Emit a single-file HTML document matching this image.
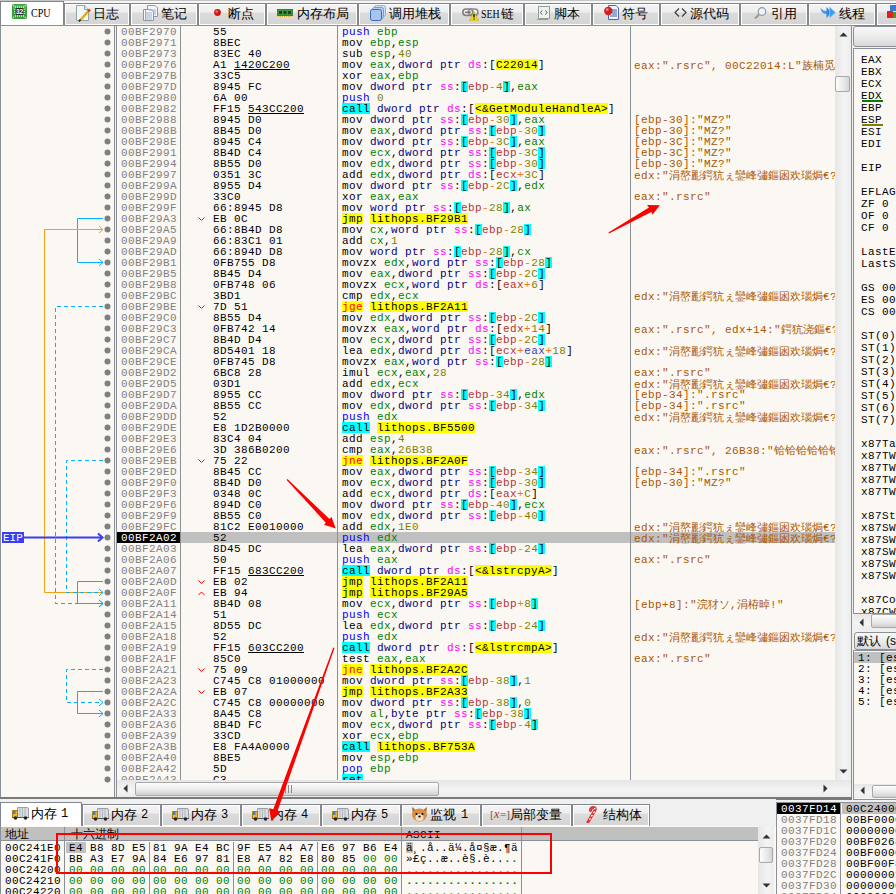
<!DOCTYPE html>
<html><head><meta charset="utf-8">
<style>
*{margin:0;padding:0;box-sizing:border-box}
html,body{width:896px;height:894px;overflow:hidden;background:#f0f0f0;font-family:"Liberation Mono",monospace}
b{font-weight:normal}
.abs{position:absolute}
.mono{font-family:"Liberation Mono",monospace;font-size:11px;letter-spacing:0.4px;line-height:13px;white-space:pre}
/* tabs */
.tab{position:absolute;border:1px solid #80868c;border-bottom:none;background:linear-gradient(#f3f3f3 0,#eeeeee 40%,#dcdcdc 41%,#d4d4d4 100%);box-shadow:inset 1px 1px 0 #fff,inset -1px -1px 0 #fff;white-space:nowrap}
.tab.act{background:#fff;box-shadow:none}
.cj{position:absolute;font-family:"Liberation Sans",sans-serif;font-size:12.5px;line-height:12px;color:#000;white-space:pre}
.tabline{position:absolute;height:1px;background:#80868c}
/* panel */
.pbg{background:#fbf8f3}
.r{position:absolute;left:0;width:719px;height:11px}
.r div{position:absolute;top:0;height:11px;font-family:"Liberation Mono",monospace;font-size:11px;letter-spacing:0.4px;line-height:13px;white-space:pre;color:#000}
.r .ad{left:4px;color:#808080}
.r .by{left:96px}
.r .ds{left:225px}
.r .cm{left:517px;color:#aa5500}
.r .cm i{font-style:normal;font-family:"Liberation Sans",sans-serif;font-size:10.8px;letter-spacing:0}
.r .chev{position:absolute;left:81px;top:4px}
.r b{display:inline-block;height:11px;vertical-align:top}
.r.eip{background:#c0c0c0}
.r.eip .ad{left:0;width:63px;padding-left:4px;background:#000;color:#fff}
u{text-decoration:underline;text-underline-offset:1px}
.sep{position:absolute;width:1px;background:#8a9096}
.rg{position:absolute;left:7px;font-family:"Liberation Mono",monospace;font-size:11px;letter-spacing:0.4px;line-height:14px;white-space:pre;color:#000}
.hr{position:absolute;left:0;width:758px;height:11px}
.hr div{position:absolute;top:0;height:11px;font-family:"Liberation Mono",monospace;font-size:11px;letter-spacing:0.4px;line-height:13px;white-space:pre;color:#000}
.hr .ha{left:5px}
.hr .z{color:#008000}
.hr .sel{background:#c0c0c0;margin-left:-3px;padding-left:3px;width:20px}
.hr .hs{left:406px}
.hr b{display:inline-block;height:11px;vertical-align:top}
.sr{position:absolute;left:0;width:121px;height:11px}
.sr div{position:absolute;top:0;height:11px;font-family:"Liberation Mono",monospace;font-size:11px;letter-spacing:0.4px;line-height:13px;white-space:pre}
.sr .sa{left:0;width:64px;padding-left:4px;color:#808080}
.sr .sv{left:65px;width:60px;padding-left:4px;color:#000}
.sr.ssel .sa{background:#000;color:#fff}
.sr.ssel .sv{background:#c0c0c0}
.sb{position:absolute;background:linear-gradient(90deg,#e6e6e6,#f4f4f4 60%,#ececec)}
.sbh{position:absolute;background:linear-gradient(#e6e6e6,#f4f4f4 60%,#ececec)}
.thumbv{position:absolute;border:1px solid #a8a8a8;border-radius:2px;background:linear-gradient(90deg,#fdfdfd,#e4e4e4 70%,#d4d4d4)}
.thumbh{position:absolute;border:1px solid #a8a8a8;border-radius:2px;background:linear-gradient(#fdfdfd,#e8e8e8 60%,#d0d0d0)}
</style></head><body>

<!-- TOP TABS -->
<div class="abs" style="left:0;top:0;width:896px;height:1px;background:#c4c4c4"></div>
<div class="abs" style="left:0;top:1px;width:896px;height:24px;background:#f6f6f6"></div>
<div class="tab act" style="left:0px;top:1px;width:64px;height:24px"></div><svg class="abs" style="left:12px;top:4px" width="15" height="15" viewBox="0 0 15 15"><rect x="0" y="0" width="15" height="15" rx="1.5" fill="#3a9c3a"/><rect x="0.5" y="0.5" width="14" height="5" rx="1" fill="#4eb04e"/><path d="M3.5 2v2M5.5 2v2M7.5 2v2M9.5 2v2M11.5 2v2M3.5 11v2M5.5 11v2M7.5 11v2M9.5 11v2M11.5 11v2M2 5.5h2M2 7.5h2M2 9.5h2M11 5.5h2M11 7.5h2M11 9.5h2" stroke="#e6d68a" stroke-width="1"/><circle cx="1.7" cy="1.7" r="0.8" fill="#f0e0a0"/><circle cx="13.3" cy="1.7" r="0.8" fill="#f0e0a0"/><circle cx="1.7" cy="13.3" r="0.8" fill="#f0e0a0"/><circle cx="13.3" cy="13.3" r="0.8" fill="#f0e0a0"/><rect x="3.5" y="4" width="8" height="7" rx="1" fill="#2a2a2a"/><text x="7.5" y="10" font-size="6.5" font-family="Liberation Sans" font-weight="bold" fill="#fff" text-anchor="middle">32</text></svg><div class="abs" style="left:31px;top:7px;font-family:'Liberation Serif';font-size:12px;line-height:13px;color:#000;transform:scaleX(0.84);transform-origin:0 0">CPU</div>
<div class="tab" style="left:64px;top:3px;width:66px;height:22px"></div><svg class="abs" style="left:75px;top:5px" width="16" height="17" viewBox="0 0 16 17"><path d="M1.5 0.5H9.5L13.5 4.5V15.5H1.5Z" fill="#f2f6f8" stroke="#8fa6a8"/><path d="M9.5 0.5V4.5H13.5" fill="#dde8ea" stroke="#8fa6a8"/><path d="M5 15.5L13.5 6" stroke="#d8b020" stroke-width="2.6"/><path d="M4 16.5L5.5 14.5" stroke="#222" stroke-width="1.5"/><path d="M13 6.5L15 4.5" stroke="#e03a3a" stroke-width="2.6"/></svg><div class="cj" style="left:93px;top:8px;">日志</div>
<div class="tab" style="left:130px;top:3px;width:68px;height:22px"></div><svg class="abs" style="left:143px;top:5px" width="15" height="16" viewBox="0 0 15 16"><path d="M4.5 0.5H12L14.5 3V11.5H4.5Z" fill="#f4f6fa" stroke="#8c98a4"/><path d="M0.5 4.5H8L10.5 7V15.5H0.5Z" fill="#f8fafc" stroke="#8c98a4"/><path d="M2 8h7M2 10h7M2 12h7M2 14h7M6 5h7M10 7h3M10 9h3" stroke="#9ab0d0"/><path d="M2.5 5v10" stroke="#e09090"/></svg><div class="cj" style="left:161px;top:8px;">笔记</div>
<div class="tab" style="left:198px;top:3px;width:68px;height:22px"></div><svg class="abs" style="left:214px;top:9px" width="7" height="7" viewBox="0 0 7 7"><circle cx="3.5" cy="3.5" r="3.4" fill="#d01818"/><circle cx="2.7" cy="2.5" r="1.2" fill="#f07070"/></svg><div class="cj" style="left:228px;top:8px;">断点</div>
<div class="tab" style="left:266px;top:3px;width:92px;height:22px"></div><svg class="abs" style="left:277px;top:9px" width="16" height="8" viewBox="0 0 16 8"><rect x="0" y="0.5" width="16" height="6" fill="#3c9a3c" stroke="#2a6a2a" stroke-width="0.8"/><rect x="2" y="2" width="3" height="3" fill="#333"/><rect x="6.5" y="2" width="3" height="3" fill="#333"/><rect x="11" y="2" width="3" height="3" fill="#333"/><path d="M1 7.5h14" stroke="#d8b040" stroke-dasharray="1,1"/></svg><div class="cj" style="left:297px;top:8px;">内存布局</div>
<div class="tab" style="left:358px;top:3px;width:92px;height:22px"></div><svg class="abs" style="left:370px;top:5px" width="17" height="16" viewBox="0 0 17 16"><rect x="4.5" y="0.5" width="11" height="11" rx="2" fill="#cfe0f4" stroke="#90aed8"/><rect x="2.5" y="2.5" width="11" height="11" rx="2" fill="#b8d0f0" stroke="#7898d0"/><rect x="0.5" y="4.5" width="11" height="11" rx="2" fill="#a8c4ec" stroke="#3a68c0"/></svg><div class="cj" style="left:389px;top:8px;">调用堆栈</div>
<div class="tab" style="left:450px;top:3px;width:74px;height:22px"></div><svg class="abs" style="left:462px;top:8px" width="17" height="13" viewBox="0 0 17 13"><rect x="0.8" y="1" width="10" height="6.5" rx="3.2" fill="none" stroke="#808080" stroke-width="1.6"/><rect x="6.5" y="1" width="9.5" height="6.5" rx="3.2" fill="none" stroke="#8a8a8a" stroke-width="1.6"/><path d="M3 4.2H9" stroke="#666" stroke-width="1.2"/><path d="M7.5 12.8L12 3.5L16.5 12.8Z" fill="#f0dc20" stroke="#c0a800" stroke-width="0.6"/><path d="M12 6v3.5M12 10.5v1" stroke="#000" stroke-width="1.3"/></svg><div class="abs" style="left:481px;top:8px;font-family:'Liberation Serif';font-size:12px;line-height:13px;letter-spacing:0;transform:scaleX(0.82);transform-origin:0 0">SEH</div><div class="cj" style="left:501px;top:8px;">链</div>
<div class="tab" style="left:524px;top:3px;width:68px;height:22px"></div><svg class="abs" style="left:536px;top:5px" width="15" height="15" viewBox="0 0 15 15"><path d="M2.5 1.5H13.5V13.5H2.5Z" fill="#eef2ec" stroke="#90a090"/><path d="M1 14.5H12" stroke="#90a090"/><path d="M6 5.5L4.5 7.5L6 9.5M9.5 5.5L11 7.5L9.5 9.5" stroke="#556" fill="none"/></svg><div class="cj" style="left:554px;top:8px;">脚本</div>
<div class="tab" style="left:592px;top:3px;width:68px;height:22px"></div><svg class="abs" style="left:604px;top:5px" width="15" height="15" viewBox="0 0 15 15"><path d="M4.5 0.5H12L14.5 3V14.5H4.5Z" fill="#f0f4fc" stroke="#4a6ab0"/><path d="M8 5h5M8 7h5M8 9h5M6 11h7" stroke="#3a5ab0"/><circle cx="4.3" cy="6" r="4.2" fill="#d42020"/><circle cx="3.2" cy="4.6" r="1.4" fill="#f08080"/></svg><div class="cj" style="left:622px;top:8px;">符号</div>
<div class="tab" style="left:660px;top:3px;width:80px;height:22px"></div><svg class="abs" style="left:674px;top:8px" width="13" height="9" viewBox="0 0 13 9"><path d="M5 0.5L1 4.5L5 8.5M8 0.5L12 4.5L8 8.5" stroke="#444" stroke-width="1.3" fill="none"/></svg><div class="cj" style="left:690px;top:8px;">源代码</div>
<div class="tab" style="left:740px;top:3px;width:68px;height:22px"></div><svg class="abs" style="left:754px;top:7px" width="13" height="12" viewBox="0 0 13 12"><circle cx="8" cy="4.5" r="3.8" fill="#eef4fa" stroke="#8898a8" stroke-width="1.2"/><path d="M5 7.5L1 11.5" stroke="#a89878" stroke-width="2"/></svg><div class="cj" style="left:771px;top:8px;">引用</div>
<div class="tab" style="left:808px;top:3px;width:68px;height:22px"></div><svg class="abs" style="left:820px;top:7px" width="16" height="11" viewBox="0 0 16 11"><path d="M0.5 0.5Q1 7.5 8 7.5L8 4Q3 4.5 0.5 0.5Z" fill="#4a9ee8"/><path d="M6.5 0L11.5 5.5L6.5 11Z" fill="#2e8ae0"/><path d="M9.5 0L15.5 5.5L9.5 11Z" fill="#3aa0f0" stroke="#8cd0ff" stroke-width="0.6"/></svg><div class="cj" style="left:839px;top:8px;">线程</div>
<div class="tab" style="left:876px;top:3px;width:31px;height:22px"></div><svg class="abs" style="left:887px;top:5px" width="9" height="13" viewBox="0 0 9 13"><rect x="3" y="0" width="6" height="6" fill="#3a7ad8"/><rect x="0" y="6" width="6" height="7" fill="#e02020"/><rect x="6" y="7" width="3" height="6" fill="#30a030"/></svg>
<div class="tabline" style="left:0;top:25px;width:896px"></div>
<!-- DISASM PANEL -->
<div class="abs pbg" style="left:0;top:25px;width:115px;height:773px;border:1px solid #8a9096;border-bottom:none"></div>
<svg class="abs" style="left:0;top:26px" width="115" height="771" viewBox="0 0 115 771"><circle cx="107.5" cy="5.5" r="3" fill="#808080"/><circle cx="107.5" cy="16.5" r="3" fill="#808080"/><circle cx="107.5" cy="27.5" r="3" fill="#808080"/><circle cx="107.5" cy="38.5" r="3" fill="#808080"/><circle cx="107.5" cy="49.5" r="3" fill="#808080"/><circle cx="107.5" cy="60.5" r="3" fill="#808080"/><circle cx="107.5" cy="71.5" r="3" fill="#808080"/><circle cx="107.5" cy="82.5" r="3" fill="#808080"/><circle cx="107.5" cy="93.5" r="3" fill="#808080"/><circle cx="107.5" cy="104.5" r="3" fill="#808080"/><circle cx="107.5" cy="115.5" r="3" fill="#808080"/><circle cx="107.5" cy="126.5" r="3" fill="#808080"/><circle cx="107.5" cy="137.5" r="3" fill="#808080"/><circle cx="107.5" cy="148.5" r="3" fill="#808080"/><circle cx="107.5" cy="159.5" r="3" fill="#808080"/><circle cx="107.5" cy="170.5" r="3" fill="#808080"/><circle cx="107.5" cy="181.5" r="3" fill="#808080"/><circle cx="107.5" cy="192.5" r="3" fill="#808080"/><circle cx="107.5" cy="203.5" r="3" fill="#808080"/><circle cx="107.5" cy="214.5" r="3" fill="#808080"/><circle cx="107.5" cy="225.5" r="3" fill="#808080"/><circle cx="107.5" cy="236.5" r="3" fill="#808080"/><circle cx="107.5" cy="247.5" r="3" fill="#808080"/><circle cx="107.5" cy="258.5" r="3" fill="#808080"/><circle cx="107.5" cy="269.5" r="3" fill="#808080"/><circle cx="107.5" cy="280.5" r="3" fill="#808080"/><circle cx="107.5" cy="291.5" r="3" fill="#808080"/><circle cx="107.5" cy="302.5" r="3" fill="#808080"/><circle cx="107.5" cy="313.5" r="3" fill="#808080"/><circle cx="107.5" cy="324.5" r="3" fill="#808080"/><circle cx="107.5" cy="335.5" r="3" fill="#808080"/><circle cx="107.5" cy="346.5" r="3" fill="#808080"/><circle cx="107.5" cy="357.5" r="3" fill="#808080"/><circle cx="107.5" cy="368.5" r="3" fill="#808080"/><circle cx="107.5" cy="379.5" r="3" fill="#808080"/><circle cx="107.5" cy="390.5" r="3" fill="#808080"/><circle cx="107.5" cy="401.5" r="3" fill="#808080"/><circle cx="107.5" cy="412.5" r="3" fill="#808080"/><circle cx="107.5" cy="423.5" r="3" fill="#808080"/><circle cx="107.5" cy="434.5" r="3" fill="#808080"/><circle cx="107.5" cy="445.5" r="3" fill="#808080"/><circle cx="107.5" cy="456.5" r="3" fill="#808080"/><circle cx="107.5" cy="467.5" r="3" fill="#808080"/><circle cx="107.5" cy="478.5" r="3" fill="#808080"/><circle cx="107.5" cy="489.5" r="3" fill="#808080"/><circle cx="107.5" cy="500.5" r="3" fill="#808080"/><circle cx="107.5" cy="511.5" r="3" fill="#808080"/><circle cx="107.5" cy="522.5" r="3" fill="#808080"/><circle cx="107.5" cy="533.5" r="3" fill="#808080"/><circle cx="107.5" cy="544.5" r="3" fill="#808080"/><circle cx="107.5" cy="555.5" r="3" fill="#808080"/><circle cx="107.5" cy="566.5" r="3" fill="#808080"/><circle cx="107.5" cy="577.5" r="3" fill="#808080"/><circle cx="107.5" cy="588.5" r="3" fill="#808080"/><circle cx="107.5" cy="599.5" r="3" fill="#808080"/><circle cx="107.5" cy="610.5" r="3" fill="#808080"/><circle cx="107.5" cy="621.5" r="3" fill="#808080"/><circle cx="107.5" cy="632.5" r="3" fill="#808080"/><circle cx="107.5" cy="643.5" r="3" fill="#808080"/><circle cx="107.5" cy="654.5" r="3" fill="#808080"/><circle cx="107.5" cy="665.5" r="3" fill="#808080"/><circle cx="107.5" cy="676.5" r="3" fill="#808080"/><circle cx="107.5" cy="687.5" r="3" fill="#808080"/><circle cx="107.5" cy="698.5" r="3" fill="#808080"/><circle cx="107.5" cy="709.5" r="3" fill="#808080"/><circle cx="107.5" cy="720.5" r="3" fill="#808080"/><circle cx="107.5" cy="731.5" r="3" fill="#808080"/><circle cx="107.5" cy="742.5" r="3" fill="#808080"/><circle cx="107.5" cy="753.5" r="3" fill="#808080"/><path d="M103 192.5 H77.5 V236.5 H103" stroke="#08b0f8" fill="none" stroke-width="1" /><path d="M99 233.0 L103 236.5 L99 240.0" stroke="#08b0f8" fill="none" stroke-width="1"/><path d="M103 566.5 H44.5 V203.5 H103" stroke="#f5a014" fill="none" stroke-width="1" /><path d="M99 200.0 L103 203.5 L99 207.0" stroke="#f5a014" fill="none" stroke-width="1"/><path d="M103 280.5 H55.5 V577.5 H103" stroke="#08b0f8" fill="none" stroke-width="1" stroke-dasharray="4,3"/><path d="M99 574.0 L103 577.5 L99 581.0" stroke="#08b0f8" fill="none" stroke-width="1"/><path d="M103 434.5 H66.5 V566.5 H103" stroke="#08b0f8" fill="none" stroke-width="1" stroke-dasharray="4,3"/><path d="M99 563.0 L103 566.5 L99 570.0" stroke="#08b0f8" fill="none" stroke-width="1"/><path d="M103 555.5 H77.5 V577.5 H103" stroke="#08b0f8" fill="none" stroke-width="1" /><path d="M99 574.0 L103 577.5 L99 581.0" stroke="#08b0f8" fill="none" stroke-width="1"/><path d="M103 643.5 H66.5 V676.5 H103" stroke="#08b0f8" fill="none" stroke-width="1" stroke-dasharray="4,3"/><path d="M99 673.0 L103 676.5 L99 680.0" stroke="#08b0f8" fill="none" stroke-width="1"/><path d="M103 665.5 H77.5 V687.5 H103" stroke="#08b0f8" fill="none" stroke-width="1" /><path d="M99 684.0 L103 687.5 L99 691.0" stroke="#08b0f8" fill="none" stroke-width="1"/></svg>
<div class="abs" style="left:2px;top:532px;width:22px;height:11px;background:#3c3cf0"></div>
<div class="abs mono" style="left:3px;top:533px;color:#fff;font-size:11px;line-height:11px;letter-spacing:0px">EIP</div>
<svg class="abs" style="left:0;top:532px" width="110" height="11" viewBox="0 0 110 11"><path d="M24 5.5H102" stroke="#3c3cf0" stroke-width="2"/><path d="M98 1.5L102.5 5.5L98 9.5" stroke="#3c3cf0" stroke-width="2" fill="none"/></svg>

<div class="abs pbg" style="left:116px;top:25px;width:736px;height:773px;border:1px solid #8a9096;border-bottom:none"></div>
<div class="abs" style="left:117px;top:26px;width:718px;height:754px;overflow:hidden">
<div class="r" style="top:0px">
<div class="ad">00BF2970</div>
<div class="by">55</div>
<div class="ds"><b style="color:#0000ff">push</b> <b style="color:#008000">ebp</b></div>
</div>
<div class="r" style="top:11px">
<div class="ad">00BF2971</div>
<div class="by">8BEC</div>
<div class="ds">mov <b style="color:#008000">ebp</b>,<b style="color:#008000">esp</b></div>
</div>
<div class="r" style="top:22px">
<div class="ad">00BF2973</div>
<div class="by">83EC 40</div>
<div class="ds">sub <b style="color:#008000">esp</b>,<b style="color:#808000">40</b></div>
</div>
<div class="r" style="top:33px">
<div class="ad">00BF2976</div>
<div class="by">A1 <u>1420C200</u></div>
<div class="ds">mov <b style="color:#008000">eax</b>,<b style="color:#000080">dword ptr </b><b style="color:#ff00ff">ds</b>:[<b style="background:#ffff00">C22014</b>]</div>
<div class="cm">eax:".rsrc", 00C22014:L"<i>族楠觅</i></div>
</div>
<div class="r" style="top:44px">
<div class="ad">00BF297B</div>
<div class="by">33C5</div>
<div class="ds">xor <b style="color:#008000">eax</b>,<b style="color:#008000">ebp</b></div>
</div>
<div class="r" style="top:55px">
<div class="ad">00BF297D</div>
<div class="by">8945 FC</div>
<div class="ds">mov <b style="color:#000080">dword ptr </b><b style="color:#ff00ff">ss</b>:<b style="background:#00ffff">[</b><b style="color:#b03434">ebp</b><b style="color:#f27711">-</b><b style="color:#808000">4</b><b style="background:#00ffff">]</b>,<b style="color:#008000">eax</b></div>
</div>
<div class="r" style="top:66px">
<div class="ad">00BF2980</div>
<div class="by">6A 00</div>
<div class="ds"><b style="color:#0000ff">push</b> <b style="color:#808000">0</b></div>
</div>
<div class="r" style="top:77px">
<div class="ad">00BF2982</div>
<div class="by">FF15 <u>543CC200</u></div>
<div class="ds"><b style="background:#00ffff">call</b> <b style="color:#000080">dword ptr </b><b style="color:#ff00ff">ds</b>:[<b style="background:#ffff00">&lt;&amp;GetModuleHandleA&gt;</b>]</div>
</div>
<div class="r" style="top:88px">
<div class="ad">00BF2988</div>
<div class="by">8945 D0</div>
<div class="ds">mov <b style="color:#000080">dword ptr </b><b style="color:#ff00ff">ss</b>:<b style="background:#00ffff">[</b><b style="color:#b03434">ebp</b><b style="color:#f27711">-</b><b style="color:#808000">30</b><b style="background:#00ffff">]</b>,<b style="color:#008000">eax</b></div>
<div class="cm">[ebp-30]:"MZ?"</div>
</div>
<div class="r" style="top:99px">
<div class="ad">00BF298B</div>
<div class="by">8B45 D0</div>
<div class="ds">mov <b style="color:#008000">eax</b>,<b style="color:#000080">dword ptr </b><b style="color:#ff00ff">ss</b>:<b style="background:#00ffff">[</b><b style="color:#b03434">ebp</b><b style="color:#f27711">-</b><b style="color:#808000">30</b><b style="background:#00ffff">]</b></div>
<div class="cm">[ebp-30]:"MZ?"</div>
</div>
<div class="r" style="top:110px">
<div class="ad">00BF298E</div>
<div class="by">8945 C4</div>
<div class="ds">mov <b style="color:#000080">dword ptr </b><b style="color:#ff00ff">ss</b>:<b style="background:#00ffff">[</b><b style="color:#b03434">ebp</b><b style="color:#f27711">-</b><b style="color:#808000">3C</b><b style="background:#00ffff">]</b>,<b style="color:#008000">eax</b></div>
<div class="cm">[ebp-3C]:"MZ?"</div>
</div>
<div class="r" style="top:121px">
<div class="ad">00BF2991</div>
<div class="by">8B4D C4</div>
<div class="ds">mov <b style="color:#008000">ecx</b>,<b style="color:#000080">dword ptr </b><b style="color:#ff00ff">ss</b>:<b style="background:#00ffff">[</b><b style="color:#b03434">ebp</b><b style="color:#f27711">-</b><b style="color:#808000">3C</b><b style="background:#00ffff">]</b></div>
<div class="cm">[ebp-3C]:"MZ?"</div>
</div>
<div class="r" style="top:132px">
<div class="ad">00BF2994</div>
<div class="by">8B55 D0</div>
<div class="ds">mov <b style="color:#008000">edx</b>,<b style="color:#000080">dword ptr </b><b style="color:#ff00ff">ss</b>:<b style="background:#00ffff">[</b><b style="color:#b03434">ebp</b><b style="color:#f27711">-</b><b style="color:#808000">30</b><b style="background:#00ffff">]</b></div>
<div class="cm">[ebp-30]:"MZ?"</div>
</div>
<div class="r" style="top:143px">
<div class="ad">00BF2997</div>
<div class="by">0351 3C</div>
<div class="ds">add <b style="color:#008000">edx</b>,<b style="color:#000080">dword ptr </b><b style="color:#ff00ff">ds</b>:[<b style="color:#b03434">ecx</b><b style="color:#f27711">+</b><b style="color:#808000">3C</b>]</div>
<div class="cm">edx:"<i>涓嶅彲鍔犺ぇ鑾峰彇鏂囦欢瑙焗</i>€?</div>
</div>
<div class="r" style="top:154px">
<div class="ad">00BF299A</div>
<div class="by">8955 D4</div>
<div class="ds">mov <b style="color:#000080">dword ptr </b><b style="color:#ff00ff">ss</b>:<b style="background:#00ffff">[</b><b style="color:#b03434">ebp</b><b style="color:#f27711">-</b><b style="color:#808000">2C</b><b style="background:#00ffff">]</b>,<b style="color:#008000">edx</b></div>
</div>
<div class="r" style="top:165px">
<div class="ad">00BF299D</div>
<div class="by">33C0</div>
<div class="ds">xor <b style="color:#008000">eax</b>,<b style="color:#008000">eax</b></div>
<div class="cm">eax:".rsrc"</div>
</div>
<div class="r" style="top:176px">
<div class="ad">00BF299F</div>
<div class="by">66:8945 D8</div>
<div class="ds">mov <b style="color:#000080">word ptr </b><b style="color:#ff00ff">ss</b>:<b style="background:#00ffff">[</b><b style="color:#b03434">ebp</b><b style="color:#f27711">-</b><b style="color:#808000">28</b><b style="background:#00ffff">]</b>,<b style="color:#008000">ax</b></div>
</div>
<div class="r" style="top:187px">
<div class="ad">00BF29A3</div>
<svg class="chev" width="7" height="5" viewBox="0 0 7 5"><path d="M0.5 0.5 L3.5 3.5 L6.5 0.5" stroke="#ff0000" fill="none" stroke-width="1"/></svg>
<div class="by">EB 0C</div>
<div class="ds"><b style="background:#ffff00">jmp</b> <b style="background:#ffff00">lithops.BF29B1</b></div>
</div>
<div class="r" style="top:198px">
<div class="ad">00BF29A5</div>
<div class="by">66:8B4D D8</div>
<div class="ds">mov <b style="color:#008000">cx</b>,<b style="color:#000080">word ptr </b><b style="color:#ff00ff">ss</b>:<b style="background:#00ffff">[</b><b style="color:#b03434">ebp</b><b style="color:#f27711">-</b><b style="color:#808000">28</b><b style="background:#00ffff">]</b></div>
</div>
<div class="r" style="top:209px">
<div class="ad">00BF29A9</div>
<div class="by">66:83C1 01</div>
<div class="ds">add <b style="color:#008000">cx</b>,<b style="color:#808000">1</b></div>
</div>
<div class="r" style="top:220px">
<div class="ad">00BF29AD</div>
<div class="by">66:894D D8</div>
<div class="ds">mov <b style="color:#000080">word ptr </b><b style="color:#ff00ff">ss</b>:<b style="background:#00ffff">[</b><b style="color:#b03434">ebp</b><b style="color:#f27711">-</b><b style="color:#808000">28</b><b style="background:#00ffff">]</b>,<b style="color:#008000">cx</b></div>
</div>
<div class="r" style="top:231px">
<div class="ad">00BF29B1</div>
<div class="by">0FB755 D8</div>
<div class="ds">movzx <b style="color:#008000">edx</b>,<b style="color:#000080">word ptr </b><b style="color:#ff00ff">ss</b>:<b style="background:#00ffff">[</b><b style="color:#b03434">ebp</b><b style="color:#f27711">-</b><b style="color:#808000">28</b><b style="background:#00ffff">]</b></div>
</div>
<div class="r" style="top:242px">
<div class="ad">00BF29B5</div>
<div class="by">8B45 D4</div>
<div class="ds">mov <b style="color:#008000">eax</b>,<b style="color:#000080">dword ptr </b><b style="color:#ff00ff">ss</b>:<b style="background:#00ffff">[</b><b style="color:#b03434">ebp</b><b style="color:#f27711">-</b><b style="color:#808000">2C</b><b style="background:#00ffff">]</b></div>
</div>
<div class="r" style="top:253px">
<div class="ad">00BF29B8</div>
<div class="by">0FB748 06</div>
<div class="ds">movzx <b style="color:#008000">ecx</b>,<b style="color:#000080">word ptr </b><b style="color:#ff00ff">ds</b>:[<b style="color:#b03434">eax</b><b style="color:#f27711">+</b><b style="color:#808000">6</b>]</div>
</div>
<div class="r" style="top:264px">
<div class="ad">00BF29BC</div>
<div class="by">3BD1</div>
<div class="ds">cmp <b style="color:#008000">edx</b>,<b style="color:#008000">ecx</b></div>
<div class="cm">edx:"<i>涓嶅彲鍔犺ぇ鑾峰彇鏂囦欢瑙焗</i>€?</div>
</div>
<div class="r" style="top:275px">
<div class="ad">00BF29BE</div>
<svg class="chev" width="7" height="5" viewBox="0 0 7 5"><path d="M0.5 0.5 L3.5 3.5 L6.5 0.5" stroke="#ff0000" fill="none" stroke-width="1"/></svg>
<div class="by">7D 51</div>
<div class="ds"><b style="color:#ff0000;background:#ffff00">jge</b> <b style="background:#ffff00">lithops.BF2A11</b></div>
</div>
<div class="r" style="top:286px">
<div class="ad">00BF29C0</div>
<div class="by">8B55 D4</div>
<div class="ds">mov <b style="color:#008000">edx</b>,<b style="color:#000080">dword ptr </b><b style="color:#ff00ff">ss</b>:<b style="background:#00ffff">[</b><b style="color:#b03434">ebp</b><b style="color:#f27711">-</b><b style="color:#808000">2C</b><b style="background:#00ffff">]</b></div>
</div>
<div class="r" style="top:297px">
<div class="ad">00BF29C3</div>
<div class="by">0FB742 14</div>
<div class="ds">movzx <b style="color:#008000">eax</b>,<b style="color:#000080">word ptr </b><b style="color:#ff00ff">ds</b>:[<b style="color:#b03434">edx</b><b style="color:#f27711">+</b><b style="color:#808000">14</b>]</div>
<div class="cm">eax:".rsrc", edx+14:"<i>鍔犺浇鏂</i>€?</div>
</div>
<div class="r" style="top:308px">
<div class="ad">00BF29C7</div>
<div class="by">8B4D D4</div>
<div class="ds">mov <b style="color:#008000">ecx</b>,<b style="color:#000080">dword ptr </b><b style="color:#ff00ff">ss</b>:<b style="background:#00ffff">[</b><b style="color:#b03434">ebp</b><b style="color:#f27711">-</b><b style="color:#808000">2C</b><b style="background:#00ffff">]</b></div>
</div>
<div class="r" style="top:319px">
<div class="ad">00BF29CA</div>
<div class="by">8D5401 18</div>
<div class="ds">lea <b style="color:#008000">edx</b>,<b style="color:#000080">dword ptr </b><b style="color:#ff00ff">ds</b>:[<b style="color:#b03434">ecx</b><b style="color:#f27711">+</b><b style="color:#3c3cb4">eax</b><b style="color:#f27711">+</b><b style="color:#808000">18</b>]</div>
<div class="cm">edx:"<i>涓嶅彲鍔犺ぇ鑾峰彇鏂囦欢瑙焗</i>€?</div>
</div>
<div class="r" style="top:330px">
<div class="ad">00BF29CE</div>
<div class="by">0FB745 D8</div>
<div class="ds">movzx <b style="color:#008000">eax</b>,<b style="color:#000080">word ptr </b><b style="color:#ff00ff">ss</b>:<b style="background:#00ffff">[</b><b style="color:#b03434">ebp</b><b style="color:#f27711">-</b><b style="color:#808000">28</b><b style="background:#00ffff">]</b></div>
</div>
<div class="r" style="top:341px">
<div class="ad">00BF29D2</div>
<div class="by">6BC8 28</div>
<div class="ds">imul <b style="color:#008000">ecx</b>,<b style="color:#008000">eax</b>,<b style="color:#808000">28</b></div>
<div class="cm">eax:".rsrc"</div>
</div>
<div class="r" style="top:352px">
<div class="ad">00BF29D5</div>
<div class="by">03D1</div>
<div class="ds">add <b style="color:#008000">edx</b>,<b style="color:#008000">ecx</b></div>
<div class="cm">edx:"<i>涓嶅彲鍔犺ぇ鑾峰彇鏂囦欢瑙焗</i>€?</div>
</div>
<div class="r" style="top:363px">
<div class="ad">00BF29D7</div>
<div class="by">8955 CC</div>
<div class="ds">mov <b style="color:#000080">dword ptr </b><b style="color:#ff00ff">ss</b>:<b style="background:#00ffff">[</b><b style="color:#b03434">ebp</b><b style="color:#f27711">-</b><b style="color:#808000">34</b><b style="background:#00ffff">]</b>,<b style="color:#008000">edx</b></div>
<div class="cm">[ebp-34]:".rsrc"</div>
</div>
<div class="r" style="top:374px">
<div class="ad">00BF29DA</div>
<div class="by">8B55 CC</div>
<div class="ds">mov <b style="color:#008000">edx</b>,<b style="color:#000080">dword ptr </b><b style="color:#ff00ff">ss</b>:<b style="background:#00ffff">[</b><b style="color:#b03434">ebp</b><b style="color:#f27711">-</b><b style="color:#808000">34</b><b style="background:#00ffff">]</b></div>
<div class="cm">[ebp-34]:".rsrc"</div>
</div>
<div class="r" style="top:385px">
<div class="ad">00BF29DD</div>
<div class="by">52</div>
<div class="ds"><b style="color:#0000ff">push</b> <b style="color:#008000">edx</b></div>
<div class="cm">edx:"<i>涓嶅彲鍔犺ぇ鑾峰彇鏂囦欢瑙焗</i>€?</div>
</div>
<div class="r" style="top:396px">
<div class="ad">00BF29DE</div>
<div class="by">E8 1D2B0000</div>
<div class="ds"><b style="background:#00ffff">call</b> <b style="background:#ffff00">lithops.BF5500</b></div>
</div>
<div class="r" style="top:407px">
<div class="ad">00BF29E3</div>
<div class="by">83C4 04</div>
<div class="ds">add <b style="color:#008000">esp</b>,<b style="color:#808000">4</b></div>
</div>
<div class="r" style="top:418px">
<div class="ad">00BF29E6</div>
<div class="by">3D 386B0200</div>
<div class="ds">cmp <b style="color:#008000">eax</b>,<b style="color:#808000">26B38</b></div>
<div class="cm">eax:".rsrc", 26B38:"<i>铪铪铪铪铪铪</i></div>
</div>
<div class="r" style="top:429px">
<div class="ad">00BF29EB</div>
<svg class="chev" width="7" height="5" viewBox="0 0 7 5"><path d="M0.5 0.5 L3.5 3.5 L6.5 0.5" stroke="#ff0000" fill="none" stroke-width="1"/></svg>
<div class="by">75 22</div>
<div class="ds"><b style="color:#ff0000;background:#ffff00">jne</b> <b style="background:#ffff00">lithops.BF2A0F</b></div>
</div>
<div class="r" style="top:440px">
<div class="ad">00BF29ED</div>
<div class="by">8B45 CC</div>
<div class="ds">mov <b style="color:#008000">eax</b>,<b style="color:#000080">dword ptr </b><b style="color:#ff00ff">ss</b>:<b style="background:#00ffff">[</b><b style="color:#b03434">ebp</b><b style="color:#f27711">-</b><b style="color:#808000">34</b><b style="background:#00ffff">]</b></div>
<div class="cm">[ebp-34]:".rsrc"</div>
</div>
<div class="r" style="top:451px">
<div class="ad">00BF29F0</div>
<div class="by">8B4D D0</div>
<div class="ds">mov <b style="color:#008000">ecx</b>,<b style="color:#000080">dword ptr </b><b style="color:#ff00ff">ss</b>:<b style="background:#00ffff">[</b><b style="color:#b03434">ebp</b><b style="color:#f27711">-</b><b style="color:#808000">30</b><b style="background:#00ffff">]</b></div>
<div class="cm">[ebp-30]:"MZ?"</div>
</div>
<div class="r" style="top:462px">
<div class="ad">00BF29F3</div>
<div class="by">0348 0C</div>
<div class="ds">add <b style="color:#008000">ecx</b>,<b style="color:#000080">dword ptr </b><b style="color:#ff00ff">ds</b>:[<b style="color:#b03434">eax</b><b style="color:#f27711">+</b><b style="color:#808000">C</b>]</div>
</div>
<div class="r" style="top:473px">
<div class="ad">00BF29F6</div>
<div class="by">894D C0</div>
<div class="ds">mov <b style="color:#000080">dword ptr </b><b style="color:#ff00ff">ss</b>:<b style="background:#00ffff">[</b><b style="color:#b03434">ebp</b><b style="color:#f27711">-</b><b style="color:#808000">40</b><b style="background:#00ffff">]</b>,<b style="color:#008000">ecx</b></div>
</div>
<div class="r" style="top:484px">
<div class="ad">00BF29F9</div>
<div class="by">8B55 C0</div>
<div class="ds">mov <b style="color:#008000">edx</b>,<b style="color:#000080">dword ptr </b><b style="color:#ff00ff">ss</b>:<b style="background:#00ffff">[</b><b style="color:#b03434">ebp</b><b style="color:#f27711">-</b><b style="color:#808000">40</b><b style="background:#00ffff">]</b></div>
</div>
<div class="r" style="top:495px">
<div class="ad">00BF29FC</div>
<div class="by">81C2 E0010000</div>
<div class="ds">add <b style="color:#008000">edx</b>,<b style="color:#808000">1E0</b></div>
<div class="cm">edx:"<i>涓嶅彲鍔犺ぇ鑾峰彇鏂囦欢瑙焗</i>€?</div>
</div>
<div class="r eip" style="top:506px">
<div class="ad">00BF2A02</div>
<div class="by">52</div>
<div class="ds"><b style="color:#0000ff">push</b> <b style="color:#008000">edx</b></div>
<div class="cm">edx:"<i>涓嶅彲鍔犺ぇ鑾峰彇鏂囦欢瑙焗</i>€?</div>
</div>
<div class="r" style="top:517px">
<div class="ad">00BF2A03</div>
<div class="by">8D45 DC</div>
<div class="ds">lea <b style="color:#008000">eax</b>,<b style="color:#000080">dword ptr </b><b style="color:#ff00ff">ss</b>:<b style="background:#00ffff">[</b><b style="color:#b03434">ebp</b><b style="color:#f27711">-</b><b style="color:#808000">24</b><b style="background:#00ffff">]</b></div>
</div>
<div class="r" style="top:528px">
<div class="ad">00BF2A06</div>
<div class="by">50</div>
<div class="ds"><b style="color:#0000ff">push</b> <b style="color:#008000">eax</b></div>
<div class="cm">eax:".rsrc"</div>
</div>
<div class="r" style="top:539px">
<div class="ad">00BF2A07</div>
<div class="by">FF15 <u>683CC200</u></div>
<div class="ds"><b style="background:#00ffff">call</b> <b style="color:#000080">dword ptr </b><b style="color:#ff00ff">ds</b>:[<b style="background:#ffff00">&lt;&amp;lstrcpyA&gt;</b>]</div>
</div>
<div class="r" style="top:550px">
<div class="ad">00BF2A0D</div>
<svg class="chev" width="7" height="5" viewBox="0 0 7 5"><path d="M0.5 0.5 L3.5 3.5 L6.5 0.5" stroke="#ff0000" fill="none" stroke-width="1"/></svg>
<div class="by">EB 02</div>
<div class="ds"><b style="background:#ffff00">jmp</b> <b style="background:#ffff00">lithops.BF2A11</b></div>
</div>
<div class="r" style="top:561px">
<div class="ad">00BF2A0F</div>
<svg class="chev" width="7" height="5" viewBox="0 0 7 5"><path d="M0.5 4 L3.5 1 L6.5 4" stroke="#ff0000" fill="none" stroke-width="1"/></svg>
<div class="by">EB 94</div>
<div class="ds"><b style="background:#ffff00">jmp</b> <b style="background:#ffff00">lithops.BF29A5</b></div>
</div>
<div class="r" style="top:572px">
<div class="ad">00BF2A11</div>
<div class="by">8B4D 08</div>
<div class="ds">mov <b style="color:#008000">ecx</b>,<b style="color:#000080">dword ptr </b><b style="color:#ff00ff">ss</b>:<b style="background:#00ffff">[</b><b style="color:#b03434">ebp</b><b style="color:#f27711">+</b><b style="color:#808000">8</b><b style="background:#00ffff">]</b></div>
<div class="cm">[ebp+8]:"<i>浣犲ソ</i>,<i>涓栫晫</i>!"</div>
</div>
<div class="r" style="top:583px">
<div class="ad">00BF2A14</div>
<div class="by">51</div>
<div class="ds"><b style="color:#0000ff">push</b> <b style="color:#008000">ecx</b></div>
</div>
<div class="r" style="top:594px">
<div class="ad">00BF2A15</div>
<div class="by">8D55 DC</div>
<div class="ds">lea <b style="color:#008000">edx</b>,<b style="color:#000080">dword ptr </b><b style="color:#ff00ff">ss</b>:<b style="background:#00ffff">[</b><b style="color:#b03434">ebp</b><b style="color:#f27711">-</b><b style="color:#808000">24</b><b style="background:#00ffff">]</b></div>
</div>
<div class="r" style="top:605px">
<div class="ad">00BF2A18</div>
<div class="by">52</div>
<div class="ds"><b style="color:#0000ff">push</b> <b style="color:#008000">edx</b></div>
<div class="cm">edx:"<i>涓嶅彲鍔犺ぇ鑾峰彇鏂囦欢瑙焗</i>€?</div>
</div>
<div class="r" style="top:616px">
<div class="ad">00BF2A19</div>
<div class="by">FF15 <u>603CC200</u></div>
<div class="ds"><b style="background:#00ffff">call</b> <b style="color:#000080">dword ptr </b><b style="color:#ff00ff">ds</b>:[<b style="background:#ffff00">&lt;&amp;lstrcmpA&gt;</b>]</div>
</div>
<div class="r" style="top:627px">
<div class="ad">00BF2A1F</div>
<div class="by">85C0</div>
<div class="ds">test <b style="color:#008000">eax</b>,<b style="color:#008000">eax</b></div>
<div class="cm">eax:".rsrc"</div>
</div>
<div class="r" style="top:638px">
<div class="ad">00BF2A21</div>
<svg class="chev" width="7" height="5" viewBox="0 0 7 5"><path d="M0.5 0.5 L3.5 3.5 L6.5 0.5" stroke="#ff0000" fill="none" stroke-width="1"/></svg>
<div class="by">75 09</div>
<div class="ds"><b style="color:#ff0000;background:#ffff00">jne</b> <b style="background:#ffff00">lithops.BF2A2C</b></div>
</div>
<div class="r" style="top:649px">
<div class="ad">00BF2A23</div>
<div class="by">C745 C8 01000000</div>
<div class="ds">mov <b style="color:#000080">dword ptr </b><b style="color:#ff00ff">ss</b>:<b style="background:#00ffff">[</b><b style="color:#b03434">ebp</b><b style="color:#f27711">-</b><b style="color:#808000">38</b><b style="background:#00ffff">]</b>,<b style="color:#808000">1</b></div>
</div>
<div class="r" style="top:660px">
<div class="ad">00BF2A2A</div>
<svg class="chev" width="7" height="5" viewBox="0 0 7 5"><path d="M0.5 0.5 L3.5 3.5 L6.5 0.5" stroke="#ff0000" fill="none" stroke-width="1"/></svg>
<div class="by">EB 07</div>
<div class="ds"><b style="background:#ffff00">jmp</b> <b style="background:#ffff00">lithops.BF2A33</b></div>
</div>
<div class="r" style="top:671px">
<div class="ad">00BF2A2C</div>
<div class="by">C745 C8 00000000</div>
<div class="ds">mov <b style="color:#000080">dword ptr </b><b style="color:#ff00ff">ss</b>:<b style="background:#00ffff">[</b><b style="color:#b03434">ebp</b><b style="color:#f27711">-</b><b style="color:#808000">38</b><b style="background:#00ffff">]</b>,<b style="color:#808000">0</b></div>
</div>
<div class="r" style="top:682px">
<div class="ad">00BF2A33</div>
<div class="by">8A45 C8</div>
<div class="ds">mov <b style="color:#008000">al</b>,<b style="color:#000080">byte ptr </b><b style="color:#ff00ff">ss</b>:<b style="background:#00ffff">[</b><b style="color:#b03434">ebp</b><b style="color:#f27711">-</b><b style="color:#808000">38</b><b style="background:#00ffff">]</b></div>
</div>
<div class="r" style="top:693px">
<div class="ad">00BF2A36</div>
<div class="by">8B4D FC</div>
<div class="ds">mov <b style="color:#008000">ecx</b>,<b style="color:#000080">dword ptr </b><b style="color:#ff00ff">ss</b>:<b style="background:#00ffff">[</b><b style="color:#b03434">ebp</b><b style="color:#f27711">-</b><b style="color:#808000">4</b><b style="background:#00ffff">]</b></div>
</div>
<div class="r" style="top:704px">
<div class="ad">00BF2A39</div>
<div class="by">33CD</div>
<div class="ds">xor <b style="color:#008000">ecx</b>,<b style="color:#008000">ebp</b></div>
</div>
<div class="r" style="top:715px">
<div class="ad">00BF2A3B</div>
<div class="by">E8 FA4A0000</div>
<div class="ds"><b style="background:#00ffff">call</b> <b style="background:#ffff00">lithops.BF753A</b></div>
</div>
<div class="r" style="top:726px">
<div class="ad">00BF2A40</div>
<div class="by">8BE5</div>
<div class="ds">mov <b style="color:#008000">esp</b>,<b style="color:#008000">ebp</b></div>
</div>
<div class="r" style="top:737px">
<div class="ad">00BF2A42</div>
<div class="by">5D</div>
<div class="ds"><b style="color:#0000ff">pop</b> <b style="color:#008000">ebp</b></div>
</div>
<div class="r" style="top:748px">
<div class="ad">00BF2A43</div>
<div class="by">C3</div>
<div class="ds"><b style="background:#00ffff">ret</b></div>
</div>
</div>
<div class="sep" style="left:180px;top:26px;height:754px"></div>
<div class="sep" style="left:337px;top:26px;height:754px"></div>
<div class="sep" style="left:630px;top:26px;height:754px"></div>
<!-- v scrollbar -->
<div class="sb" style="left:835px;top:26px;width:16px;height:754px"></div>
<svg class="abs" style="left:839px;top:31px" width="9" height="6"><path d="M0.5 5.5L4.5 1.5L8.5 5.5Z" fill="#333"/></svg>
<div class="thumbv" style="left:835px;top:76px;width:15px;height:16px"></div>
<svg class="abs" style="left:839px;top:769px" width="9" height="6"><path d="M0.5 0.5L4.5 4.5L8.5 0.5Z" fill="#333"/></svg>
<!-- h scrollbar -->
<div class="sbh" style="left:117px;top:780px;width:734px;height:17px"></div>
<svg class="abs" style="left:122px;top:784px" width="6" height="9"><path d="M5.5 0.5L1.5 4.5L5.5 8.5Z" fill="#333"/></svg>
<div class="thumbh" style="left:135px;top:782px;width:304px;height:14px"></div><div class="abs" style="left:285px;top:785px;width:7px;height:8px;background:repeating-linear-gradient(90deg,#8a8a8a 0 1px,transparent 1px 3px)"></div>
<svg class="abs" style="left:823px;top:784px" width="6" height="9"><path d="M0.5 0.5L4.5 4.5L0.5 8.5Z" fill="#333"/></svg>
<div class="abs" style="left:0;top:797px;width:852px;height:3px;background:#7a7a7a"></div>

<!-- RIGHT PANEL -->
<div class="abs" style="left:853px;top:26px;width:50px;height:21px;border:1px solid #8a9096;border-radius:3px;background:linear-gradient(#f8f8f8,#ececec 50%,#d8d8d8)"></div>
<div class="abs pbg" style="left:853px;top:48px;width:50px;height:566px;border:1px solid #8a9096;overflow:hidden">
<div class="rg" style="top:4px">EAX</div><div class="rg" style="top:16px">EBX</div><div class="rg" style="top:28px">ECX</div><div class="rg" style="top:40px">EDX</div><div class="rg" style="top:52px">EBP</div><div class="rg" style="top:64px">ESP</div><div class="rg" style="top:76px">ESI</div><div class="rg" style="top:88px">EDI</div><div class="rg" style="top:112px">EIP</div><div class="rg" style="top:136px">EFLAGS</div><div class="rg" style="top:148px">ZF 0</div><div class="rg" style="top:160px">OF 0</div><div class="rg" style="top:172px">CF 0</div><div class="rg" style="top:196px">LastError</div><div class="rg" style="top:208px">LastStatus</div><div class="rg" style="top:232px">GS 0000</div><div class="rg" style="top:244px">ES 0000</div><div class="rg" style="top:256px">CS 0000</div><div class="rg" style="top:280px">ST(0)</div><div class="rg" style="top:292px">ST(1)</div><div class="rg" style="top:304px">ST(2)</div><div class="rg" style="top:316px">ST(3)</div><div class="rg" style="top:328px">ST(4)</div><div class="rg" style="top:340px">ST(5)</div><div class="rg" style="top:352px">ST(6)</div><div class="rg" style="top:364px">ST(7)</div><div class="rg" style="top:388px">x87TagWord</div><div class="rg" style="top:400px">x87TW_0</div><div class="rg" style="top:412px">x87TW_1</div><div class="rg" style="top:424px">x87TW_2</div><div class="rg" style="top:436px">x87TW_3</div><div class="rg" style="top:460px">x87StatusWord</div><div class="rg" style="top:472px">x87SW_0</div><div class="rg" style="top:484px">x87SW_1</div><div class="rg" style="top:496px">x87SW_2</div><div class="rg" style="top:508px">x87SW_3</div><div class="rg" style="top:520px">x87SW_4</div><div class="rg" style="top:544px">x87ControlWord</div><div class="rg" style="top:556px">x87CW_IC</div>
<div class="abs" style="left:8px;top:51px;width:21px;height:2px;background:#008000"></div>
<div class="abs" style="left:8px;top:75px;width:21px;height:2px;background:#808000"></div>
</div>
<div class="sbh" style="left:854px;top:614px;width:42px;height:16px"></div>
<svg class="abs" style="left:858px;top:618px" width="6" height="9"><path d="M5.5 0.5L1.5 4.5L5.5 8.5Z" fill="#333"/></svg>
<div class="thumbh" style="left:871px;top:614px;width:40px;height:14px"></div>
<div class="abs" style="left:854px;top:632px;width:50px;height:18px;border:1px solid #8a9096;border-radius:3px;background:linear-gradient(#f8f8f8,#ececec 50%,#d8d8d8)"></div>
<div class="abs" style="left:857px;top:635px;font-family:'Liberation Sans';font-size:12px;line-height:12px;white-space:pre">默认</div><div class="abs" style="left:886px;top:635px;font-family:'Liberation Sans';font-size:12px;line-height:12px;white-space:pre">(s</div>
<div class="abs pbg" style="left:853px;top:650px;width:50px;height:150px;border:1px solid #8a9096;overflow:hidden">
<div class="abs" style="left:0;top:1px;width:50px;height:11px;background:#c0c0c0"></div>
<div class="abs mono" style="left:4px;top:1px">1: [es</div>
<div class="abs mono" style="left:4px;top:12px">2: [es</div>
<div class="abs mono" style="left:4px;top:23px">3: [es</div>
<div class="abs mono" style="left:4px;top:34px">4: [es</div>
<div class="abs mono" style="left:4px;top:45px">5: [es</div>
</div>
<div class="sbh" style="left:854px;top:784px;width:42px;height:14px"></div>
<svg class="abs" style="left:859px;top:786px" width="6" height="9"><path d="M5.5 0.5L1.5 4.5L5.5 8.5Z" fill="#333"/></svg>
<div class="thumbh" style="left:872px;top:785px;width:40px;height:13px"></div>

<!-- BOTTOM TABS -->
<div class="abs" style="left:0;top:799px;width:776px;height:27px;background:#f0f0f0"></div>
<div class="tab act" style="left:0px;top:802px;width:82px;height:24px"></div><svg class="abs" style="left:12px;top:807px" width="17" height="13" viewBox="0 0 17 13"><path d="M5.5 0.5H15Q16.5 0.5 16.5 2V10.5H5.5Z" fill="#dcdfe2" stroke="#9aa0a6"/><path d="M8 1v9M10.5 1v9M13 1v9" stroke="#b0b6bc"/><path d="M0.5 3.5H5.5V10.5H0.5Z" fill="#f2b820" stroke="#b07808"/><rect x="1" y="4" width="2.5" height="3" fill="#4a80c0"/><path d="M0 10.5H17" stroke="#555"/><circle cx="3.5" cy="11" r="1.8" fill="#222"/><circle cx="13.5" cy="11" r="1.8" fill="#222"/></svg><div class="cj" style="left:31px;top:808px;">内存</div><div class="abs" style="left:61px;top:808px;font-family:'Liberation Mono';font-size:12px;line-height:13px">1</div>
<div class="tab" style="left:82px;top:804px;width:79px;height:22px"></div><svg class="abs" style="left:92px;top:808px" width="17" height="13" viewBox="0 0 17 13"><path d="M5.5 0.5H15Q16.5 0.5 16.5 2V10.5H5.5Z" fill="#dcdfe2" stroke="#9aa0a6"/><path d="M8 1v9M10.5 1v9M13 1v9" stroke="#b0b6bc"/><path d="M0.5 3.5H5.5V10.5H0.5Z" fill="#f2b820" stroke="#b07808"/><rect x="1" y="4" width="2.5" height="3" fill="#4a80c0"/><path d="M0 10.5H17" stroke="#555"/><circle cx="3.5" cy="11" r="1.8" fill="#222"/><circle cx="13.5" cy="11" r="1.8" fill="#222"/></svg><div class="cj" style="left:111px;top:809px;">内存</div><div class="abs" style="left:141px;top:809px;font-family:'Liberation Mono';font-size:12px;line-height:13px">2</div>
<div class="tab" style="left:161px;top:804px;width:80px;height:22px"></div><svg class="abs" style="left:172px;top:808px" width="17" height="13" viewBox="0 0 17 13"><path d="M5.5 0.5H15Q16.5 0.5 16.5 2V10.5H5.5Z" fill="#dcdfe2" stroke="#9aa0a6"/><path d="M8 1v9M10.5 1v9M13 1v9" stroke="#b0b6bc"/><path d="M0.5 3.5H5.5V10.5H0.5Z" fill="#f2b820" stroke="#b07808"/><rect x="1" y="4" width="2.5" height="3" fill="#4a80c0"/><path d="M0 10.5H17" stroke="#555"/><circle cx="3.5" cy="11" r="1.8" fill="#222"/><circle cx="13.5" cy="11" r="1.8" fill="#222"/></svg><div class="cj" style="left:191px;top:809px;">内存</div><div class="abs" style="left:221px;top:809px;font-family:'Liberation Mono';font-size:12px;line-height:13px">3</div>
<div class="tab" style="left:241px;top:804px;width:80px;height:22px"></div><svg class="abs" style="left:252px;top:808px" width="17" height="13" viewBox="0 0 17 13"><path d="M5.5 0.5H15Q16.5 0.5 16.5 2V10.5H5.5Z" fill="#dcdfe2" stroke="#9aa0a6"/><path d="M8 1v9M10.5 1v9M13 1v9" stroke="#b0b6bc"/><path d="M0.5 3.5H5.5V10.5H0.5Z" fill="#f2b820" stroke="#b07808"/><rect x="1" y="4" width="2.5" height="3" fill="#4a80c0"/><path d="M0 10.5H17" stroke="#555"/><circle cx="3.5" cy="11" r="1.8" fill="#222"/><circle cx="13.5" cy="11" r="1.8" fill="#222"/></svg><div class="cj" style="left:271px;top:809px;">内存</div><div class="abs" style="left:301px;top:809px;font-family:'Liberation Mono';font-size:12px;line-height:13px">4</div>
<div class="tab" style="left:321px;top:804px;width:80px;height:22px"></div><svg class="abs" style="left:332px;top:808px" width="17" height="13" viewBox="0 0 17 13"><path d="M5.5 0.5H15Q16.5 0.5 16.5 2V10.5H5.5Z" fill="#dcdfe2" stroke="#9aa0a6"/><path d="M8 1v9M10.5 1v9M13 1v9" stroke="#b0b6bc"/><path d="M0.5 3.5H5.5V10.5H0.5Z" fill="#f2b820" stroke="#b07808"/><rect x="1" y="4" width="2.5" height="3" fill="#4a80c0"/><path d="M0 10.5H17" stroke="#555"/><circle cx="3.5" cy="11" r="1.8" fill="#222"/><circle cx="13.5" cy="11" r="1.8" fill="#222"/></svg><div class="cj" style="left:351px;top:809px;">内存</div><div class="abs" style="left:381px;top:809px;font-family:'Liberation Mono';font-size:12px;line-height:13px">5</div>
<div class="tab" style="left:401px;top:804px;width:80px;height:22px"></div><svg class="abs" style="left:411px;top:806px" width="17" height="16" viewBox="0 0 17 16"><path d="M1 1L6 5L2 9Z" fill="#b8682a"/><path d="M16 1L11 5L15 9Z" fill="#b8682a"/><ellipse cx="8.5" cy="9" rx="7.5" ry="6.5" fill="#d89048"/><ellipse cx="8.5" cy="11.5" rx="4" ry="3.5" fill="#f6e0c4"/><circle cx="5.5" cy="8" r="1" fill="#000"/><circle cx="11.5" cy="8" r="1" fill="#000"/><ellipse cx="8.5" cy="10.5" rx="1.3" ry="0.9" fill="#000"/></svg><div class="cj" style="left:430px;top:809px;">监视</div><div class="abs" style="left:461px;top:809px;font-family:'Liberation Mono';font-size:12px;line-height:13px">1</div>
<div class="tab" style="left:481px;top:804px;width:91px;height:22px"></div><svg class="abs" style="left:490px;top:808px" width="20" height="13" viewBox="0 0 20 13"><text x="0" y="10" font-family="Liberation Serif" font-size="11" fill="#666">[</text><text x="4" y="10" font-family="Liberation Serif" font-style="italic" font-size="12" fill="#b03030">x</text><text x="10" y="10" font-family="Liberation Serif" font-size="11" fill="#555">=]</text></svg><div class="cj" style="left:510px;top:809px;">局部变量</div>
<div class="tab" style="left:572px;top:804px;width:78px;height:22px"></div><svg class="abs" style="left:585px;top:806px" width="15" height="17" viewBox="0 0 15 17"><path d="M3 16L9.5 5Q11.5 1.5 8.5 1.5Q5.5 1.5 5.5 4.5" stroke="#e03838" stroke-width="3" fill="none" stroke-linecap="round"/><path d="M4.2 13.6L5.6 12.6M6.2 10.2L7.6 9.2M8.2 6.8L9.8 5.8M9 2.2L10.5 3" stroke="#fff" stroke-width="1.2"/></svg><div class="cj" style="left:603px;top:809px;">结构体</div>
<div class="tabline" style="left:0;top:826px;width:776px"></div>
<!-- MEMORY PANEL -->
<div class="abs pbg" style="left:0;top:826px;width:776px;height:68px;border-left:1px solid #8a9096"></div>
<div class="abs" style="left:1px;top:827px;width:757px;height:14px;background:#c0c0c0;border-bottom:1px solid #8a9096"></div>
<div class="abs" style="left:5px;top:827px;font-family:'Liberation Sans';font-size:12px;line-height:14px">地址</div>
<div class="abs" style="left:71px;top:827px;font-family:'Liberation Sans';font-size:12px;line-height:14px">十六进制</div>
<div class="abs mono" style="left:406px;top:829px">ASCII</div>
<div class="abs" style="left:0;top:826px;width:758px;height:68px;overflow:hidden">
<div class="hr" style="top:16px"><div class="ha">00C241E0</div>
<div class="hb sel" style="left:69px">E4</div>
<div class="hb" style="left:90px">B8</div>
<div class="hb" style="left:111px">8D</div>
<div class="hb" style="left:132px">E5</div>
<div class="hb" style="left:153px">81</div>
<div class="hb" style="left:174px">9A</div>
<div class="hb" style="left:195px">E4</div>
<div class="hb" style="left:216px">BC</div>
<div class="hb" style="left:237px">9F</div>
<div class="hb" style="left:258px">E5</div>
<div class="hb" style="left:279px">A4</div>
<div class="hb" style="left:300px">A7</div>
<div class="hb" style="left:321px">E6</div>
<div class="hb" style="left:342px">97</div>
<div class="hb" style="left:363px">B6</div>
<div class="hb" style="left:384px">E4</div>
<div class="hs"><b style="background:#c0c0c0">ä</b>¸.å..ä¼.å¤§æ.¶ä</div></div>
<div class="hr" style="top:27px"><div class="ha">00C241F0</div>
<div class="hb" style="left:69px">BB</div>
<div class="hb" style="left:90px">A3</div>
<div class="hb" style="left:111px">E7</div>
<div class="hb" style="left:132px">9A</div>
<div class="hb" style="left:153px">84</div>
<div class="hb" style="left:174px">E6</div>
<div class="hb" style="left:195px">97</div>
<div class="hb" style="left:216px">81</div>
<div class="hb" style="left:237px">E8</div>
<div class="hb" style="left:258px">A7</div>
<div class="hb" style="left:279px">82</div>
<div class="hb" style="left:300px">E8</div>
<div class="hb" style="left:321px">80</div>
<div class="hb" style="left:342px">85</div>
<div class="hb z" style="left:363px">00</div>
<div class="hb z" style="left:384px">00</div>
<div class="hs">»£ç..æ..è§.è..<b style="color:#008000;font-weight:bold">.</b><b style="color:#008000;font-weight:bold">.</b></div></div>
<div class="hr" style="top:38px"><div class="ha">00C24200</div>
<div class="hb z" style="left:69px">00</div>
<div class="hb z" style="left:90px">00</div>
<div class="hb z" style="left:111px">00</div>
<div class="hb z" style="left:132px">00</div>
<div class="hb z" style="left:153px">00</div>
<div class="hb z" style="left:174px">00</div>
<div class="hb z" style="left:195px">00</div>
<div class="hb z" style="left:216px">00</div>
<div class="hb z" style="left:237px">00</div>
<div class="hb z" style="left:258px">00</div>
<div class="hb z" style="left:279px">00</div>
<div class="hb z" style="left:300px">00</div>
<div class="hb z" style="left:321px">00</div>
<div class="hb z" style="left:342px">00</div>
<div class="hb z" style="left:363px">00</div>
<div class="hb z" style="left:384px">00</div>
<div class="hs"><b style="color:#008000;font-weight:bold">.</b><b style="color:#008000;font-weight:bold">.</b><b style="color:#008000;font-weight:bold">.</b><b style="color:#008000;font-weight:bold">.</b><b style="color:#008000;font-weight:bold">.</b><b style="color:#008000;font-weight:bold">.</b><b style="color:#008000;font-weight:bold">.</b><b style="color:#008000;font-weight:bold">.</b><b style="color:#008000;font-weight:bold">.</b><b style="color:#008000;font-weight:bold">.</b><b style="color:#008000;font-weight:bold">.</b><b style="color:#008000;font-weight:bold">.</b><b style="color:#008000;font-weight:bold">.</b><b style="color:#008000;font-weight:bold">.</b><b style="color:#008000;font-weight:bold">.</b><b style="color:#008000;font-weight:bold">.</b></div></div>
<div class="hr" style="top:49px"><div class="ha">00C24210</div>
<div class="hb z" style="left:69px">00</div>
<div class="hb z" style="left:90px">00</div>
<div class="hb z" style="left:111px">00</div>
<div class="hb z" style="left:132px">00</div>
<div class="hb z" style="left:153px">00</div>
<div class="hb z" style="left:174px">00</div>
<div class="hb z" style="left:195px">00</div>
<div class="hb z" style="left:216px">00</div>
<div class="hb z" style="left:237px">00</div>
<div class="hb z" style="left:258px">00</div>
<div class="hb z" style="left:279px">00</div>
<div class="hb z" style="left:300px">00</div>
<div class="hb z" style="left:321px">00</div>
<div class="hb z" style="left:342px">00</div>
<div class="hb z" style="left:363px">00</div>
<div class="hb z" style="left:384px">00</div>
<div class="hs"><b style="color:#008000;font-weight:bold">.</b><b style="color:#008000;font-weight:bold">.</b><b style="color:#008000;font-weight:bold">.</b><b style="color:#008000;font-weight:bold">.</b><b style="color:#008000;font-weight:bold">.</b><b style="color:#008000;font-weight:bold">.</b><b style="color:#008000;font-weight:bold">.</b><b style="color:#008000;font-weight:bold">.</b><b style="color:#008000;font-weight:bold">.</b><b style="color:#008000;font-weight:bold">.</b><b style="color:#008000;font-weight:bold">.</b><b style="color:#008000;font-weight:bold">.</b><b style="color:#008000;font-weight:bold">.</b><b style="color:#008000;font-weight:bold">.</b><b style="color:#008000;font-weight:bold">.</b><b style="color:#008000;font-weight:bold">.</b></div></div>
<div class="hr" style="top:60px"><div class="ha">00C24220</div>
<div class="hb z" style="left:69px">00</div>
<div class="hb z" style="left:90px">00</div>
<div class="hb z" style="left:111px">00</div>
<div class="hb z" style="left:132px">00</div>
<div class="hb z" style="left:153px">00</div>
<div class="hb z" style="left:174px">00</div>
<div class="hb z" style="left:195px">00</div>
<div class="hb z" style="left:216px">00</div>
<div class="hb z" style="left:237px">00</div>
<div class="hb z" style="left:258px">00</div>
<div class="hb z" style="left:279px">00</div>
<div class="hb z" style="left:300px">00</div>
<div class="hb z" style="left:321px">00</div>
<div class="hb z" style="left:342px">00</div>
<div class="hb z" style="left:363px">00</div>
<div class="hb z" style="left:384px">00</div>
<div class="hs"><b style="color:#008000;font-weight:bold">.</b><b style="color:#008000;font-weight:bold">.</b><b style="color:#008000;font-weight:bold">.</b><b style="color:#008000;font-weight:bold">.</b><b style="color:#008000;font-weight:bold">.</b><b style="color:#008000;font-weight:bold">.</b><b style="color:#008000;font-weight:bold">.</b><b style="color:#008000;font-weight:bold">.</b><b style="color:#008000;font-weight:bold">.</b><b style="color:#008000;font-weight:bold">.</b><b style="color:#008000;font-weight:bold">.</b><b style="color:#008000;font-weight:bold">.</b><b style="color:#008000;font-weight:bold">.</b><b style="color:#008000;font-weight:bold">.</b><b style="color:#008000;font-weight:bold">.</b><b style="color:#008000;font-weight:bold">.</b></div></div>
</div>
<div class="sep" style="left:64px;top:827px;height:67px"></div>
<div class="sep" style="left:149px;top:842px;height:52px"></div>
<div class="sep" style="left:233px;top:842px;height:52px"></div>
<div class="sep" style="left:317px;top:842px;height:52px"></div>
<div class="sep" style="left:401px;top:827px;height:67px"></div>
<div class="sep" style="left:521px;top:827px;height:67px"></div>
<div class="sb" style="left:758px;top:826px;width:16px;height:68px"></div>
<svg class="abs" style="left:762px;top:833px" width="9" height="6"><path d="M0.5 5.5L4.5 1.5L8.5 5.5Z" fill="#333"/></svg>
<div class="thumbv" style="left:759px;top:847px;width:14px;height:16px"></div>
<svg class="abs" style="left:762px;top:883px" width="9" height="6"><path d="M0.5 0.5L4.5 4.5L8.5 0.5Z" fill="#333"/></svg>

<!-- STACK PANEL -->
<div class="abs pbg" style="left:776px;top:802px;width:130px;height:100px;border:1px solid #8a9096"></div>
<div class="abs" style="left:777px;top:803px;width:119px;height:91px;overflow:hidden">
<div class="sr ssel" style="top:0px"><div class="sa">0037FD14</div><div class="sv">00C24000</div></div>
<div class="sr" style="top:11px"><div class="sa">0037FD18</div><div class="sv">00BF0000</div></div>
<div class="sr" style="top:22px"><div class="sa">0037FD1C</div><div class="sv">00000000</div></div>
<div class="sr" style="top:33px"><div class="sa">0037FD20</div><div class="sv">00BF0268</div></div>
<div class="sr" style="top:44px"><div class="sa">0037FD24</div><div class="sv">00BF0000</div></div>
<div class="sr" style="top:55px"><div class="sa">0037FD28</div><div class="sv">00BF00F8</div></div>
<div class="sr" style="top:66px"><div class="sa">0037FD2C</div><div class="sv">00000001</div></div>
<div class="sr" style="top:77px"><div class="sa">0037FD30</div><div class="sv">00000000</div></div>
<div class="sr" style="top:88px"><div class="sa">0037FD34</div><div class="sv">00000000</div></div>
</div>
<div class="sep" style="left:840px;top:803px;height:91px"></div>

<!-- ANNOTATIONS -->
<svg class="abs" style="left:0;top:0" width="896" height="894" viewBox="0 0 896 894">
<rect x="57" y="834" width="494" height="39" fill="none" stroke="#ff0000" stroke-width="2"/>
<path d="M608.4 232.4 L649.0 207.5 L647.0 205.0 L659.9 205.2 L652.4 214.7 L651.4 212.0 L609.0 233.4 Z" fill="#ff0000"/>
<path d="M287.4 479.1 L329.5 519.0 L331.5 517.0 L335.8 528.6 L324.0 524.7 L325.8 522.7 L286.6 479.9 Z" fill="#ff0000"/>
<path d="M333.3 647.6 L273.3 809.3 L269.1 808.3 L271.3 821.0 L280.1 812.6 L277.7 810.5 L334.5 648.0 Z" fill="#ff0000"/>
</svg>
</body></html>
